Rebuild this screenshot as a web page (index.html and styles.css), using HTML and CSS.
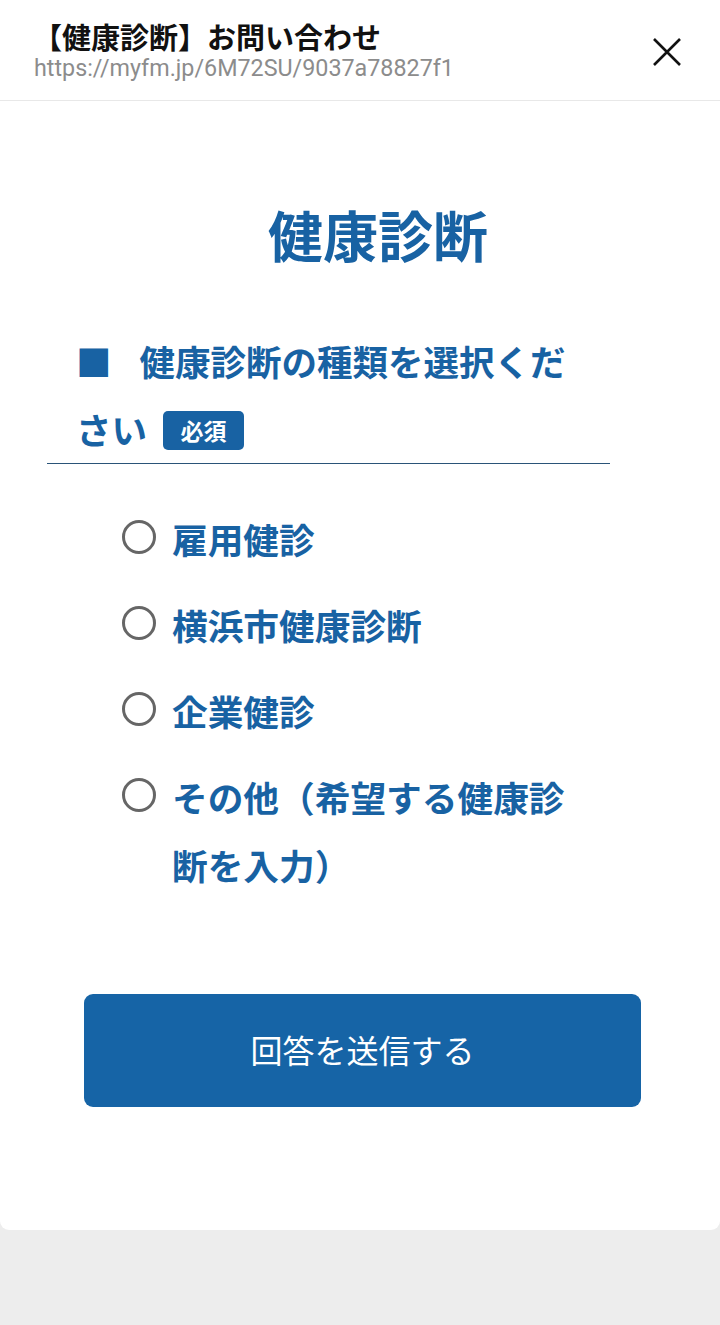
FILE: index.html
```html
<!DOCTYPE html>
<html lang="ja">
<head>
<meta charset="utf-8">
<title>【健康診断】お問い合わせ</title>
<link rel="stylesheet" href="styles.css">
</head>
<body>
<header class="topbar">
  <div class="topbar-text">
    <div class="topbar-title">【健康診断】お問い合わせ</div>
    <div class="topbar-url">https://myfm.jp/6M72SU/9037a78827f1</div>
  </div>
  <svg class="close" width="30" height="30" viewBox="0 0 30 30" aria-label="閉じる">
    <path d="M2 2 L28 28 M28 2 L2 28" stroke="#111" stroke-width="2.6" fill="none"/>
  </svg>
</header>
<main class="card">
  <h1 class="form-title">健康診断</h1>
  <h2 class="question"><span class="mark">■</span>健康診断の種類を選択ください<span class="badge">必須</span></h2>
  <div class="options">
    <label class="option"><span class="radio"></span><span class="option-text">雇用健診</span></label>
    <label class="option"><span class="radio"></span><span class="option-text">横浜市健康診断</span></label>
    <label class="option"><span class="radio"></span><span class="option-text">企業健診</span></label>
    <label class="option"><span class="radio"></span><span class="option-text">その他（希望する健康診断を入力）</span></label>
  </div>
  <button class="submit" type="button">回答を送信する</button>
</main>
</body>
</html>
```
FILE: styles.css
```css
* { box-sizing: border-box; }
html, body { margin: 0; padding: 0; }
body {
  background: #ededed;
  font-family: "Noto Sans CJK JP", "Noto Sans", sans-serif;
  height: 1325px;
}
.topbar {
  background: #fff;
  height: 101px;
  border-bottom: 1px solid #e8e8e8;
  display: flex;
  align-items: flex-start;
  justify-content: space-between;
  padding: 16px 38px 0 34px;
}
.topbar-title {
  font-size: 29px;
  font-weight: 700;
  color: #111;
  line-height: 40px;
  margin-left: -1px;
}
.topbar-url {
  font-family: Roboto, "Liberation Sans", sans-serif;
  font-size: 23.3px;
  color: #8c8c8c;
  line-height: 28px;
  margin-top: -2px;
}
.close { margin-top: 21px; }
.card {
  background: #fff;
  border-radius: 0 0 9px 9px;
  padding: 92px 0 123px;
}
.form-title {
  margin: 0 0 54px;
  padding-left: 36px;
  text-align: center;
  font-size: 55px;
  line-height: 80px;
  font-weight: 700;
  color: #1862a3;
}
.question {
  margin: 0 110px 0 47px;
  padding: 0 30px 0 29px;
  font-size: 35.5px;
  line-height: 68px;
  font-weight: 700;
  color: #1862a3;
  border-bottom: 1px solid #2a5478;
}
.mark {
  margin-right: 28px;
}
.badge {
  display: inline-block;
  vertical-align: 4px;
  margin-left: 16px;
  background: #1862a3;
  color: #fff;
  font-size: 23px;
  line-height: 39px;
  height: 39px;
  width: 81px;
  text-align: center;
  border-radius: 5px;
}
.options {
  margin: 41px 147px 0 122px;
  display: flex;
  flex-direction: column;
  gap: 18px;
}
.option {
  display: flex;
  align-items: flex-start;
  gap: 16px;
}
.radio {
  flex-shrink: 0;
  width: 34px;
  height: 34px;
  margin-top: 15px;
  border: 3px solid #666;
  border-radius: 50%;
}
.option-text {
  font-size: 35.7px;
  line-height: 68px;
  font-weight: 700;
  color: #1862a3;
}
.submit {
  display: block;
  margin: 95px 79px 0 84px;
  width: 557px;
  height: 113px;
  padding: 0 0 4px;
  border: none;
  border-radius: 9px;
  background: #1664a6;
  color: #fff;
  font-family: "Noto Sans CJK JP", sans-serif;
  font-size: 32px;
  font-weight: 400;
}
```
